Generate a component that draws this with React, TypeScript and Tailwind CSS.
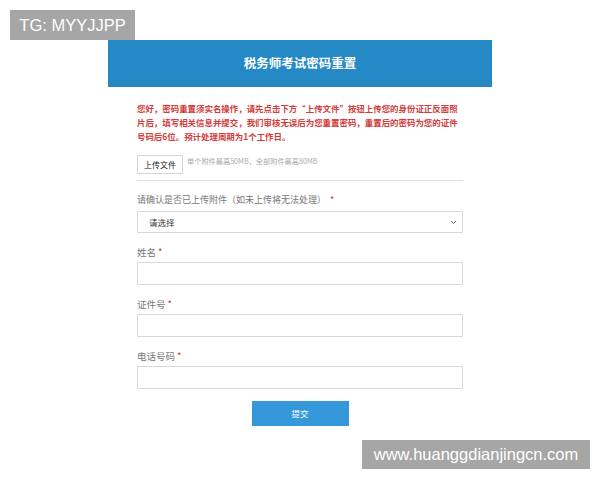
import React from "react";

const font = { fontFamily: '"Noto Sans CJK SC", "Noto Sans", sans-serif' };

function Label({ text }: { text: string }) {
  return (
    <div className="text-[9.5px] leading-[12px] text-[#777]">
      {text}
      <span className="ml-[2px] text-[#c0392b]">*</span>
    </div>
  );
}

function Field({ label }: { label: string }) {
  return (
    <div className="flex flex-col gap-[4px]">
      <Label text={label} />
      <div className="h-[23px] w-full border border-[#d9d9d9] bg-white" />
    </div>
  );
}

export default function App() {
  return (
    <div className="relative h-[480px] w-[600px] bg-white" style={font}>
      <div className="absolute left-[10px] top-[10px] flex h-[30px] w-[125px] items-center justify-center bg-[#a6a6a6] text-[16.5px] text-white" style={{ fontFamily: '"Liberation Sans", Arial, sans-serif' }}>
        TG: MYYJJPP
      </div>

      <div className="mx-auto w-[384px] pt-[40px]">
        <div className="flex h-[47px] items-center justify-center bg-[#2489c5] text-[12.5px] font-bold text-white">
          税务师考试密码重置
        </div>

        <div className="px-[29px] pt-[14px]">
          <p className="text-[8.45px] leading-[14px] font-bold text-[#d23c3c]">
            您好，密码重置须实名操作，请先点击下方“上传文件”按钮上传您的身份证正反面照片后，填写相关信息并提交，我们审核无误后为您重置密码，重置后的密码为您的证件号码后6位。预计处理周期为1个工作日。
          </p>

          <div className="mt-[12px] flex items-start gap-[4px]">
            <div className="flex h-[19px] w-[46px] items-center justify-center border border-[#d6d6d6] bg-white text-[8px] text-[#222]">
              上传文件
            </div>
            <div className="pt-[1px] text-[7.2px] leading-[10px] text-[#aaa]">
              单个附件最高50MB，全部附件最高80MB
            </div>
          </div>

          <div className="mt-[6px] h-px w-full bg-[#dedede]" />

          <div className="mt-[13px] flex flex-col gap-[5px]">
            <div className="text-[9px] leading-[12px] text-[#777]">
              请确认是否已上传附件（如未上传将无法处理）<span className="ml-[4px] text-[#c0392b]">*</span>
            </div>
            <div className="flex h-[22px] w-full items-center justify-between border border-[#d9d9d9] bg-white pl-[11px] pr-[5px]">
              <span className="text-[8.5px] text-[#333]">请选择</span>
              <svg width="7" height="5" viewBox="0 0 7 5" fill="none">
                <path d="M1 1l2.5 2.5L6 1" stroke="#666" strokeWidth="1" />
              </svg>
            </div>
          </div>

          <div className="mt-[13px] flex flex-col gap-[13px]">
            <Field label="姓名" />
            <Field label="证件号" />
            <Field label="电话号码" />
          </div>

          <div className="mt-[12px] flex justify-center">
            <div className="flex h-[25px] w-[97px] items-center justify-center bg-[#3498db] text-[8.5px] text-white">
              提交
            </div>
          </div>
        </div>
      </div>

      <div className="absolute left-[362px] top-[440px] flex h-[29px] w-[228px] items-center justify-center bg-[#a6a6a6] text-[16.5px] text-white" style={{ fontFamily: '"Liberation Sans", Arial, sans-serif' }}>
        www.huanggdianjingcn.com
      </div>
    </div>
  );
}
